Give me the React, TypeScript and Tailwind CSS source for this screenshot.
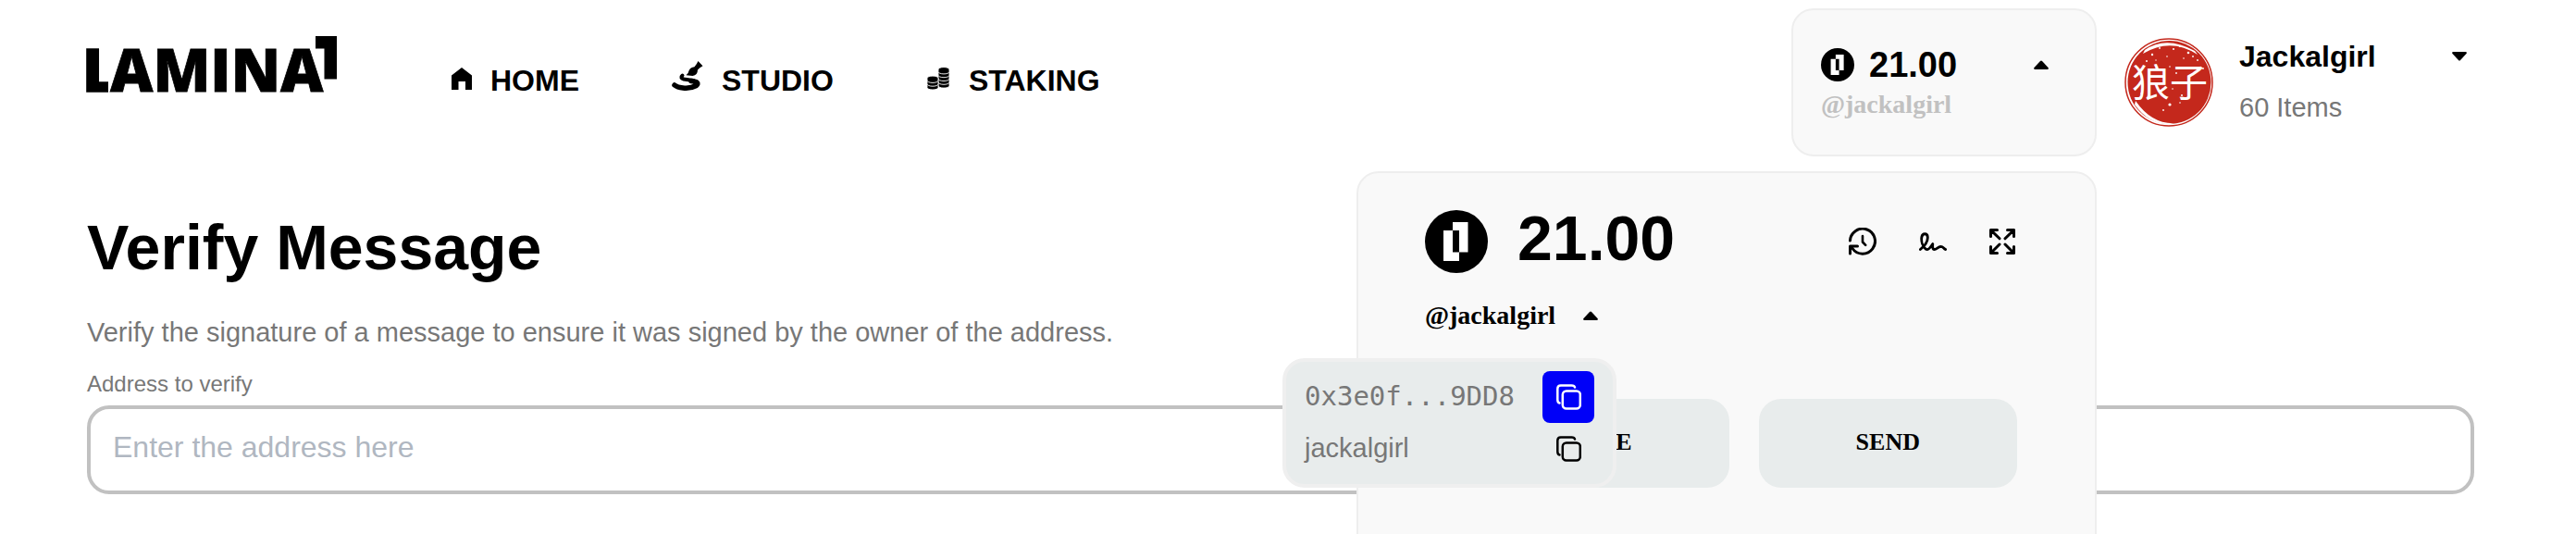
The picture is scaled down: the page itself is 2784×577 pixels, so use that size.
import type { ReactNode } from "react";

const sans = "font-['Liberation_Sans',Arial,sans-serif]";
const serif = "font-['Liberation_Serif','Times_New_Roman',serif]";

function Logo() {
  return (
    <svg
      viewBox="0 0 270 60"
      className="h-[60px] w-[270px] overflow-visible font-['Open_Sans',sans-serif] text-[64px] font-extrabold"
      role="img"
      aria-label="LAMINA1"
    >
      <text x="-5" y="60" stroke="black" strokeWidth="1.500">
        L
      </text>
      <path d="M23 40H40V61H23z" fill="white" />
      <text x="25" y="60" stroke="black" strokeWidth="0.800">
        AMINA
      </text>
      <path d="M247 0h23v46.500h-13.500V13.500H247z" />
    </svg>
  );
}

function HomeIcon() {
  return (
    <svg viewBox="0 0 22 40" className="h-10 w-[22px]" aria-hidden="true">
      <path d="M11 6L22 14.500V30h-7v-9H7.500v9H0V14.500z" />
    </svg>
  );
}

function StudioIcon() {
  return (
    <svg viewBox="0 0 34 40" className="h-10 w-[34px] overflow-visible" aria-hidden="true">
      <path d="M28.500 -1L33.500 4.200Q30 6 28 8.500Q28 14 22.500 15L15.500 14.300Q18 12.500 18.500 9.500Q20 5.500 24.500 5.200Q27 2.500 28.500 -1z" />
      <path d="M11.500 14.500Q8.500 17 13 18.500L23 20" fill="none" stroke="black" strokeWidth="4" strokeLinecap="round" />
      <path
        d="M21 20.500Q31 21.500 26.500 25.500Q20 29 12 28Q6 27.500 3 25"
        fill="none"
        stroke="black"
        strokeWidth="5.500"
        strokeLinecap="round"
      />
    </svg>
  );
}

function CoinStack({ x, top, count }: { x: number; top: number; count: number }) {
  return (
    <g>
      {Array.from({ length: count }, (_, i) => count - 1 - i).map((i) => (
        <path
          key={i}
          d={`M${x} ${top + i * 3.8}a6 2.400 0 0 1 12 0v2.500a6 2.400 0 0 1 -12 0z`}
          stroke="white"
          strokeWidth="0.900"
        />
      ))}
    </g>
  );
}

function StakingIcon() {
  return (
    <svg viewBox="0 0 26 40" className="h-10 w-[26px]" aria-hidden="true">
      <CoinStack x={13} top={8} count={5} />
      <CoinStack x={1} top={17.5} count={3} />
    </svg>
  );
}

function TokenIcon({ className }: { className: string }) {
  return (
    <svg viewBox="0 0 68 68" className={className} aria-hidden="true">
      <circle cx="34" cy="34" r="34" />
      <path d="M20 22h17v33H20zM30 13h16.500v32.500H30z" fill="white" fillRule="evenodd" />
    </svg>
  );
}

function Caret({ down = false }: { down?: boolean }) {
  return (
    <svg viewBox="0 0 16 10" className="h-2.5 w-4" aria-hidden="true">
      <path
        d={
          down
            ? "M1 0H15Q16.500 .5 15.500 2L9 9Q8 10 7 9L.5 2Q-.5 .5 1 0z"
            : "M1 10H15Q16.500 9.500 15.500 8L9 1Q8 0 7 1L.5 8Q-.5 9.500 1 10z"
        }
      />
    </svg>
  );
}

function LineIcon({ box, className, children }: { box: string; className: string; children: ReactNode }) {
  return (
    <svg
      viewBox={box}
      className={className}
      fill="none"
      stroke="currentColor"
      strokeWidth="3"
      strokeLinecap="round"
      strokeLinejoin="round"
      aria-hidden="true"
    >
      {children}
    </svg>
  );
}

function CopyIcon() {
  return (
    <svg
      viewBox="0 0 27 28"
      className="h-7 w-[27px]"
      fill="none"
      stroke="currentColor"
      strokeWidth="2.500"
      strokeLinecap="round"
      aria-hidden="true"
    >
      <rect x="6.800" y="7.500" width="19" height="19" rx="4" />
      <path d="M3.500 20.500Q1.300 20 1.300 17V5Q1.300 1.500 4.800 1.500H16.500Q19.500 1.500 20 3.500" />
    </svg>
  );
}

const specks = [
  [30, 18, 1.2], [38, 11, 0.9], [46, 20, 0.8], [53, 12, 1], [60, 9, 1.1], [69, 16, 1.3], [64, 22, 0.8],
  [74, 20, 0.9], [24, 25, 1], [34, 24, 0.7], [79, 24, 0.9], [49, 31, 0.8], [56, 38, 0.9], [52, 55, 0.8],
  [62, 62, 1], [42, 78, 0.9], [49, 72, 1.6], [60, 70, 0.8], [18, 60, 0.8], [85, 33, 0.9],
];

function Avatar() {
  return (
    <svg viewBox="0 0 96 96" className="size-24" role="img" aria-label="Jackalgirl avatar">
      <circle cx="48" cy="48" r="47" fill="white" stroke="#c4281c" strokeWidth="1.500" />
      <circle cx="48.500" cy="48" r="45" fill="#c4281c" />
      <path d="M22 13Q45 -3 76 14L79 18Q50 -1 20 17zM12 68Q30 94 56 92Q30 98 11 72z" fill="white" />
      {specks.map(([x, y, r]) => (
        <circle key={`${x}-${y}`} cx={x} cy={y} r={r} fill="white" />
      ))}
      <text
        x="8"
        y="63"
        fontSize="41"
        fill="white"
        className="font-['Noto_Sans_CJK_TC','Noto_Sans_CJK_JP',sans-serif] font-normal"
      >
        狼子
      </text>
    </svg>
  );
}

function NavLink({ icon, label }: { icon: ReactNode; label: string }) {
  return (
    <a href="#" className="flex items-center gap-5 text-[32px] leading-10 font-bold">
      {icon}
      {label}
    </a>
  );
}

function AddressPopover() {
  return (
    <div
      className={`absolute top-[62px] -left-[154px] w-[361px] rounded-3xl border-4 border-[#efefef] bg-[#e8ecec] px-5 py-2.5 text-[29px] font-normal text-[#777] ${sans}`}
    >
      <div className="flex items-center justify-between">
        <span className="font-['DejaVu_Sans_Mono',monospace]">0x3e0f...9DD8</span>
        <button
          aria-label="Copy address"
          className="flex size-14 items-center justify-center rounded-lg bg-[#0000f8] text-white"
        >
          <CopyIcon />
        </button>
      </div>
      <div className="flex items-center justify-between">
        <span>jackalgirl</span>
        <button aria-label="Copy username" className="flex size-14 items-center justify-center text-black">
          <CopyIcon />
        </button>
      </div>
    </div>
  );
}

function WalletPanel() {
  const action = "h-24 flex-auto rounded-3xl bg-[#e8ecec] pb-1 text-[26px]";
  return (
    <section
      aria-label="Wallet"
      className="absolute top-[calc(100%+18px)] -right-0.5 w-[800px] rounded-3xl border-2 border-[#eee] bg-[#f9f9f9] pt-9 pr-[84px] pb-32 pl-[72px]"
    >
      <div className="flex items-center justify-between">
        <div className="flex items-center gap-8">
          <TokenIcon className="size-[68px]" />
          <span className="pb-2 text-[68px] leading-[68px] font-bold">21.00</span>
        </div>
        <div className="flex items-center gap-[46px] pr-0.5">
          <button aria-label="History">
            <LineIcon box="0 0 30 30" className="size-[30px]">
              <path d="M1.500 14A13.500 13.500 0 1 1 4 22.500M9.500 20H1.500V28" />
              <path d="M15 9V15.500L18.200 18.800" strokeWidth="2.600" />
            </LineIcon>
          </button>
          <button aria-label="Sign message">
            <LineIcon box="0 -5 30 30" className="size-[30px]">
              <path
                strokeWidth="2.800"
                d="M1.400 18.500C5 15.500 9.500 10 9.300 5.500C9.200 .5 3.500 .5 2.800 5.500C2.200 10 4 15.500 7.500 18.300C10.500 20 12.500 15.500 14.800 12.500C14.500 15.500 14.500 18.500 16.500 18.500C19 18.500 20.500 15.500 23.500 15.300C26 15.300 26.500 17.500 28.600 18.600"
              />
            </LineIcon>
          </button>
          <button aria-label="Expand">
            <LineIcon box="0 0 28 28" className="size-7">
              <path d="M8.500 1.500H1.500V8.500M1.500 1.500L11 10.800M19.500 1.500H26.500V8.500M26.500 1.500L17 10.800M8.500 26.500H1.500V19.500M1.500 26.500L11 17M19.500 26.500H26.500V19.500M26.500 26.500L17 17" />
            </LineIcon>
          </button>
        </div>
      </div>
      <div className={`relative mt-[26px] ${serif}`}>
        <button className="flex items-center gap-[30px] text-[28px] leading-8 font-bold">
          @jackalgirl
          <Caret />
        </button>
        <AddressPopover />
      </div>
      <div className={`mt-[74px] flex gap-8 font-bold ${serif}`}>
        <button className={action}>RECEIVE</button>
        <button className={action}>SEND</button>
      </div>
    </section>
  );
}

function WalletCard() {
  return (
    <div className="relative z-10 ml-auto w-[330px] rounded-3xl border-2 border-[#eee] bg-[#f9f9f9]">
      <button className="block w-full pt-[37px] pr-[50px] pb-[38px] pl-[30px] text-left">
        <span className="flex items-center gap-4">
          <TokenIcon className="size-9" />
          <span className="flex-1 text-[38px] leading-[44px] font-bold">21.00</span>
          <Caret />
        </span>
        <span className={`mt-[5px] block text-[28px] leading-8 font-bold text-[#c1c1c1] ${serif}`}>@jackalgirl</span>
      </button>
      <WalletPanel />
    </div>
  );
}

function Profile() {
  return (
    <button className="mt-8 ml-[30px] flex w-[378px] gap-7 pr-2 text-left">
      <Avatar />
      <span className="flex flex-1 flex-col gap-[15px]">
        <span className="flex items-center justify-between text-[32px] leading-10 font-bold">
          Jackalgirl
          <Caret down />
        </span>
        <span className="text-[29px] leading-10 text-[#777]">60 Items</span>
      </span>
    </button>
  );
}

function Field({ id, label, placeholder }: { id: string; label: string; placeholder: string }) {
  return (
    <div className="flex flex-col gap-[7px]">
      <label htmlFor={id} className="text-2xl leading-8 text-[#777]">
        {label}
      </label>
      <input
        id={id}
        type="text"
        placeholder={placeholder}
        className="h-24 w-full rounded-3xl border-4 border-[#c1c1c1] bg-white px-6 pb-1.5 text-[32px] placeholder:text-[#b0b7c1]"
      />
    </div>
  );
}

export default function App() {
  return (
    <div className={`h-screen overflow-hidden bg-white pt-[9px] pr-[110px] pl-[94px] text-black ${sans}`}>
      <header className="flex items-start">
        <a href="#" className="mt-[30px]">
          <Logo />
        </a>
        <nav className="mt-[58px] ml-[124px] flex gap-[100px]">
          <NavLink icon={<HomeIcon />} label="HOME" />
          <NavLink icon={<StudioIcon />} label="STUDIO" />
          <NavLink icon={<StakingIcon />} label="STAKING" />
        </nav>
        <WalletCard />
        <Profile />
      </header>
      <main className="pt-[58px]">
        <h1 className="text-[68px] leading-[80px] font-bold">Verify Message</h1>
        <p className="mt-8 text-[29px] leading-10 text-[#777]">
          Verify the signature of a message to ensure it was signed by the owner of the address.
        </p>
        <form className="mt-5 flex flex-col gap-9">
          <Field id="address" label="Address to verify" placeholder="Enter the address here" />
          <Field id="message" label="Message to verify" placeholder="Enter the message here" />
        </form>
      </main>
    </div>
  );
}
